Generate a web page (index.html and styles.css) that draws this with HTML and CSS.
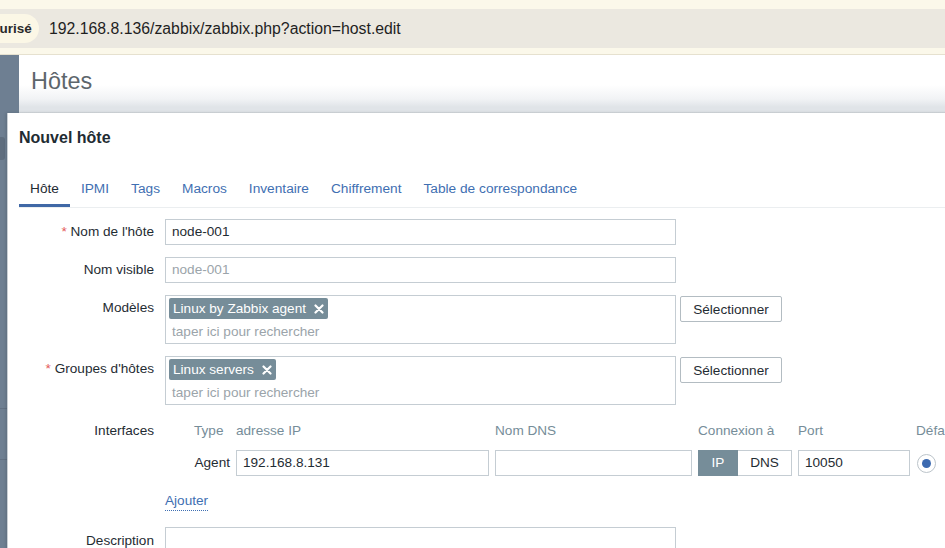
FILE: index.html
```html
<!DOCTYPE html>
<html lang="fr">
<head>
<meta charset="utf-8">
<title>Hôtes</title>
<link rel="stylesheet" href="styles.css">
</head>
<body>
<div class="browser">
  <div class="browser-top"></div>
  <div class="addressbar">
    <span class="secure-pill">curisé</span>
    <span class="url">192.168.8.136/zabbix/zabbix.php?action=host.edit</span>
  </div>
  <div class="browser-bottom"></div>
</div>
<div class="app">
  <aside class="sidebar">
    <div class="side-knob"></div>
    <div class="side-item"></div>
    <div class="side-item"></div>
    <div class="side-item"></div>
    <div class="side-sep"></div>
    <div class="side-sep"></div>
  </aside>
  <main class="main">
    <header class="page-header">
      <h1 class="page-title">Hôtes</h1>
    </header>
  </main>

  <section class="modal">
    <h2 class="modal-title">Nouvel hôte</h2>
    <ul class="tabs">
      <li class="tab active">Hôte</li>
      <li class="tab">IPMI</li>
      <li class="tab">Tags</li>
      <li class="tab">Macros</li>
      <li class="tab">Inventaire</li>
      <li class="tab">Chiffrement</li>
      <li class="tab">Table de correspondance</li>
    </ul>

    <form class="form">
      <label class="label"><span class="req">*</span> Nom de l'hôte</label>
      <div class="field"><div class="input">node-001</div></div>

      <label class="label">Nom visible</label>
      <div class="field"><div class="input placeholder">node-001</div></div>

      <label class="label">Modèles</label>
      <div class="field field-row">
        <div class="multiselect">
          <span class="chip">Linux by Zabbix agent <svg class="chip-x" viewBox="0 0 10 10" width="10" height="10"><path d="M1.5 1.5 L8.5 8.5 M8.5 1.5 L1.5 8.5" stroke="#fff" stroke-width="2.2" stroke-linecap="round"/></svg></span>
          <span class="ms-placeholder">taper ici pour rechercher</span>
        </div>
        <button type="button" class="btn">Sélectionner</button>
      </div>

      <label class="label"><span class="req">*</span> Groupes d'hôtes</label>
      <div class="field field-row">
        <div class="multiselect">
          <span class="chip">Linux servers <svg class="chip-x" viewBox="0 0 10 10" width="10" height="10"><path d="M1.5 1.5 L8.5 8.5 M8.5 1.5 L1.5 8.5" stroke="#fff" stroke-width="2.2" stroke-linecap="round"/></svg></span>
          <span class="ms-placeholder">taper ici pour rechercher</span>
        </div>
        <button type="button" class="btn">Sélectionner</button>
      </div>

      <label class="label label-iface">Interfaces</label>
      <div class="field field-iface">
        <div class="iface">
          <span class="ih">Type</span>
          <span class="ih">adresse IP</span>
          <span class="ih">Nom DNS</span>
          <span class="ih">Connexion à</span>
          <span class="ih">Port</span>
          <span class="ih">Défaut</span>

          <span class="itype">Agent</span>
          <div class="input">192.168.8.131</div>
          <div class="input"></div>
          <div class="toggle"><span class="tg on">IP</span><span class="tg">DNS</span></div>
          <div class="input">10050</div>
          <span class="radio"><span class="radio-dot"></span></span>
        </div>
      </div>

      <span class="label"></span>
      <div class="field link-field"><a class="link">Ajouter</a></div>

      <label class="label">Description</label>
      <div class="field"><div class="textarea"></div></div>
    </form>
  </section>
</div>
</body>
</html>
```

FILE: styles.css
```css
* { box-sizing: border-box; }
html, body {
  margin: 0;
  padding: 0;
  width: 945px;
  height: 548px;
  overflow: hidden;
  font-family: "Liberation Sans", Arial, sans-serif;
  color: #1f2c33;
  background: #fff;
}

/* browser chrome */
.browser { height: 55px; background: #fbf8ea; display: flex; flex-direction: column; }
.browser-top { height: 9px; }
.addressbar {
  height: 39px;
  background: #ebe8e0;
  display: flex;
  align-items: center;
}
.secure-pill {
  height: 29px;
  line-height: 29px;
  padding: 0 8px 0 0;
  margin-left: -8px;
  width: 47px;
  text-align: right;
  background: #fbf7e6;
  border-radius: 0 15px 15px 0;
  font-size: 13.5px;
  font-weight: bold;
  color: #2a2a2a;
}
.url {
  margin-left: 10px;
  font-size: 15.8px;
  color: #1f1f1f;
}
.browser-bottom { flex: 1; border-bottom: 1px solid #e6e1cf; }

/* app */
.app {
  position: relative;
  display: flex;
  height: 493px;
}
.sidebar {
  width: 19px;
  background: #6e7f92;
  display: flex;
  flex-direction: column;
  padding-top: 82px;
}
.side-knob {
  width: 5px;
  height: 23px;
  background: #5f6e7f;
  border-radius: 0 3px 3px 0;
  margin-bottom: 60px;
}
.side-item { height: 46px; }
.side-sep { height: 1px; margin-top: 50px; background: #627183; }
.main { flex: 1; }
.page-header {
  height: 58px;
  background: linear-gradient(#fff 0, #fff 30px, #f1f3f5 44px, #e0e4e8 52px, #e0e4e8 57px, #c9cfd5 58px);
  padding: 13px 0 0 12px;
}
.page-title {
  margin: 0;
  font-weight: normal;
  font-size: 23.4px;
  line-height: 26px;
  color: #5d666c;
}

/* modal overlay */
.modal {
  position: absolute;
  left: 7px;
  top: 58px;
  right: -20px;
  bottom: -20px;
  background: #fff;
  border-left: 1px solid #c9d0d6;
  box-shadow: -1px 0 3px rgba(0,0,0,0.15);
  padding: 0 0 0 11px;
}
.modal-title {
  margin: 16px 0 0 0;
  font-size: 16px;
  line-height: 18px;
  font-weight: bold;
  color: #1f2c33;
}

.tabs {
  list-style: none;
  margin: 34px 0 0 0;
  padding: 0;
  display: flex;
  border-bottom: 1px solid #ebeef0;
  font-size: 13.7px;
}
.tab {
  line-height: 16px;
  padding: 0 11px 7px;
  border-bottom: 3px solid transparent;
  color: #3f6fb2;
}
.tab.active {
  color: #1f2c33;
  border-bottom-color: #4068a6;
}

/* form */
.form {
  display: grid;
  grid-template-columns: 146px 1fr;
  column-gap: 11px;
  row-gap: 12px;
  margin: 11px 0 0 -11px;
  font-size: 13.6px;
}
.label {
  text-align: right;
  line-height: 26px;
  color: #1f2c33;
  white-space: nowrap;
}
.label-iface { margin-top: 1px; }
.req { color: #e45959; }
.field { min-width: 0; }
.field-row { display: flex; align-items: flex-start; gap: 4px; }
.input {
  width: 511px;
  height: 26px;
  line-height: 24px;
  border: 1px solid #c5cdd3;
  padding: 0 6px;
  background: #fff;
  color: #1f2c33;
  white-space: nowrap;
  overflow: hidden;
}
.input.placeholder { color: #9ba4aa; }
.multiselect {
  width: 511px;
  height: 49px;
  border: 1px solid #c5cdd3;
  padding: 2px 3px 0;
  display: flex;
  flex-direction: column;
  align-items: flex-start;
}
.chip {
  display: inline-flex;
  align-items: center;
  gap: 6px;
  height: 21px;
  padding: 0 4px 0 4px;
  background: #768d99;
  color: #fff;
  border-radius: 2px;
  line-height: 21px;
}
.chip-x { margin-left: 2px; }
.ms-placeholder {
  color: #9ba4aa;
  line-height: 22px;
  padding-left: 3px;
  margin-top: 2px;
}
.btn {
  width: 102px;
  height: 26px;
  margin-top: 1px;
  background: #fff;
  border: 1px solid #b3bcc2;
  border-radius: 2px;
  font-family: inherit;
  font-size: 13.6px;
  color: #1f2c33;
  padding: 0;
}

/* interfaces */
.field-iface { padding-top: 1px; }
.iface {
  display: grid;
  grid-template-columns: 36px 253px 197px 94px 112px 40px;
  grid-template-rows: 26px 26px;
  column-gap: 6px;
  row-gap: 6px;
  padding-left: 29px;
  width: 790px;
}
.ih { color: #768d99; line-height: 26px; white-space: nowrap; }
.itype { text-align: right; line-height: 26px; }
.iface .input { width: auto; }
.toggle {
  display: flex;
  height: 26px;
  border: 1px solid #c5cdd3;
}
.tg {
  flex: 1;
  text-align: center;
  line-height: 24px;
}
.tg.on {
  flex: 0 0 40px;
  background: #768d99;
  color: #fff;
  margin: -1px 0 -1px -1px;
  line-height: 26px;
}
.radio {
  width: 19px;
  height: 19px;
  margin-top: 4px;
  margin-left: 1px;
  border: 1px solid #bcc4ca;
  border-radius: 50%;
  display: flex;
  align-items: center;
  justify-content: center;
}
.radio-dot {
  width: 9px;
  height: 9px;
  border-radius: 50%;
  background: #3c6ab0;
}
.link-field { height: 28px; }
.link {
  display: inline-block;
  line-height: 22px;
  color: #3f6fb2;
  border-bottom: 1px dotted #3f6fb2;
  height: 21px;
  margin-top: 2px;
}
.textarea {
  width: 511px;
  height: 60px;
  border: 1px solid #c5cdd3;
  margin-top: -1px;
}
```
